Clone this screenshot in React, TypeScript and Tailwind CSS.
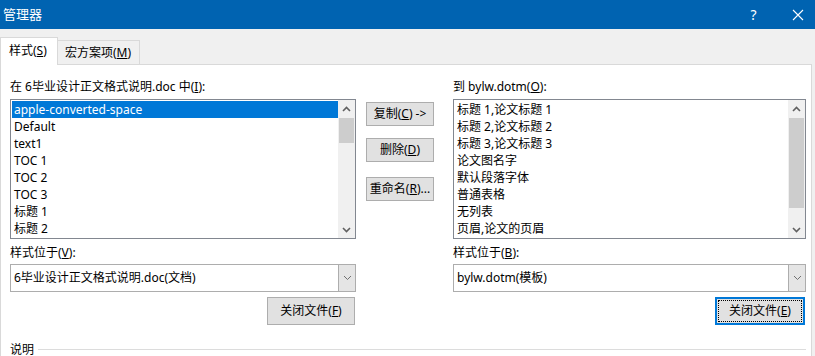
import React from "react";

const leftItems = [
  "apple-converted-space",
  "Default",
  "text1",
  "TOC 1",
  "TOC 2",
  "TOC 3",
  "标题 1",
  "标题 2",
];

const rightItems = [
  "标题 1,论文标题 1",
  "标题 2,论文标题 2",
  "标题 3,论文标题 3",
  "论文图名字",
  "默认段落字体",
  "普通表格",
  "无列表",
  "页眉,论文的页眉",
];

function Chevron({ up }: { up?: boolean }) {
  return (
    <svg width="9" height="6" viewBox="0 0 9 6" className="block">
      <path
        d={up ? "M1 5 L4.5 1.5 L8 5" : "M1 1 L4.5 4.5 L8 1"}
        fill="none"
        stroke="#606060"
        strokeWidth="1.6"
      />
    </svg>
  );
}

function ListBox({
  items,
  selected,
  thumbTop,
  thumbHeight,
}: {
  items: string[];
  selected?: number;
  thumbTop: number;
  thumbHeight: number;
}) {
  return (
    <div className="flex h-[140px] border border-[#828790] bg-white">
      <div className="flex-1 pt-[1px] pl-[1px]">
        {items.map((it, i) => (
          <div
            key={i}
            className={`h-[17px] leading-[17px] pl-[2px] whitespace-nowrap ${
              i === selected ? "bg-[#0078d7] text-white" : "text-black"
            }`}
          >
            {it}
          </div>
        ))}
      </div>
      <div className="relative w-[17px] bg-[#f0f0f0]">
        <div className="h-[17px] flex items-center justify-center">
          <Chevron up />
        </div>
        <div
          className="absolute left-[1px] right-[1px] bg-[#cdcdcd]"
          style={{ top: thumbTop, height: thumbHeight }}
        />
        <div className="absolute bottom-0 left-0 right-0 h-[17px] flex items-center justify-center">
          <Chevron />
        </div>
      </div>
    </div>
  );
}

function Combo({ text }: { text: string }) {
  return (
    <div className="flex h-[28px] border border-[#adadad] bg-white">
      <div className="flex-1 pl-[3px] leading-[26px] whitespace-nowrap">{text}</div>
      <div className="w-[17px] bg-[#e5e5e5] border-l border-[#adadad] flex items-center justify-center">
        <svg width="9" height="6" viewBox="0 0 9 6">
          <path d="M1 1 L4.5 4.5 L8 1" fill="none" stroke="#707070" strokeWidth="1" />
        </svg>
      </div>
    </div>
  );
}

function Btn({
  children,
  className = "",
  focused,
}: {
  children: React.ReactNode;
  className?: string;
  focused?: boolean;
}) {
  if (focused) {
    return (
      <div className={`border-2 border-[#0078d7] bg-[#e1e1e1] p-[1px] ${className}`}>
        <div className="h-full border border-dotted border-black flex items-center justify-center">
          {children}
        </div>
      </div>
    );
  }
  return (
    <div
      className={`border border-[#adadad] bg-[#e1e1e1] flex items-center justify-center ${className}`}
    >
      {children}
    </div>
  );
}

export default function App() {
  return (
    <div
      className="w-[815px] h-[356px] overflow-hidden bg-[#f0f0f0] text-[12px] text-black"
      style={{ fontFamily: '"Noto Sans", "Noto Sans CJK SC", sans-serif' }}
    >
      {/* Title bar */}
      <div className="h-[29px] bg-[#0063b1] flex items-center text-white">
        <div className="pl-[3px] text-[13px] flex-1">管理器</div>
        <div className="w-[45px] mr-[5px] text-center text-[14px]">?</div>
        <div className="w-[34px] flex items-center justify-center">
          <svg width="12" height="12" viewBox="0 0 12 12">
            <path d="M1 1 L11 11 M11 1 L1 11" stroke="white" strokeWidth="1.1" />
          </svg>
        </div>
      </div>

      {/* Tabs */}
      <div className="flex items-end h-[36px]">
        <div className="relative z-10 h-[28px] w-[58px] bg-white border border-b-0 border-[#d9d9d9] pl-[8px] leading-[26px]">
          样式(<u>S</u>)
        </div>
        <div className="h-[25px] w-[82px] border border-l-0 border-b-0 border-[#d9d9d9] pl-[7px] leading-[24px]">
          宏方案项(<u>M</u>)
        </div>
      </div>

      {/* Panel */}
      <div className="relative -mt-[1px] w-[812px] h-[300px] bg-white border border-[#d9d9d9] pl-[9px] pr-[5px]">
        <div className="flex">
          {/* Left column */}
          <div className="w-[346px]">
            <div className="mt-[13px] h-[17px] leading-[17px] mb-[4px]">
              在 6毕业设计正文格式说明.doc 中(<u>I</u>):
            </div>
            <ListBox items={leftItems} selected={0} thumbTop={18} thumbHeight={25} />
            <div className="mt-[5px] h-[17px] leading-[17px] mb-[3px]">
              样式位于(<u>V</u>):
            </div>
            <Combo text="6毕业设计正文格式说明.doc(文档)" />
            <div className="flex justify-end mt-[5px] pr-[1px]">
              <Btn className="w-[88px] h-[28px]">
                关闭文件(<u>F</u>)
              </Btn>
            </div>
          </div>

          {/* Middle buttons */}
          <div className="w-[68px] ml-[10px] mt-[37px] flex flex-col">
            <Btn className="h-[24px]">
              复制(<u>C</u>) -&gt;
            </Btn>
            <Btn className="h-[24px] mt-[12px]">
              删除(<u>D</u>)
            </Btn>
            <Btn className="h-[24px] mt-[15px]">
              重命名(<u>R</u>)...
            </Btn>
          </div>

          {/* Right column */}
          <div className="w-[353px] ml-[19px]">
            <div className="mt-[13px] h-[17px] leading-[17px] mb-[4px]">
              到 bylw.dotm(<u>O</u>):
            </div>
            <ListBox items={rightItems} thumbTop={18} thumbHeight={90} />
            <div className="mt-[5px] h-[17px] leading-[17px] mb-[3px]">
              样式位于(<u>B</u>):
            </div>
            <Combo text="bylw.dotm(模板)" />
            <div className="flex justify-end mt-[5px] pr-[1px]">
              <Btn focused className="w-[90px] h-[28px]">
                关闭文件(<u>E</u>)
              </Btn>
            </div>
          </div>
        </div>

        {/* Description group */}
        <div className="flex items-center mt-[16px] w-[796px]">
          <div className="leading-[17px]">说明</div>
          <div className="flex-1 ml-[4px] h-[1px] bg-[#dcdcdc]" />
        </div>
      </div>
    </div>
  );
}
